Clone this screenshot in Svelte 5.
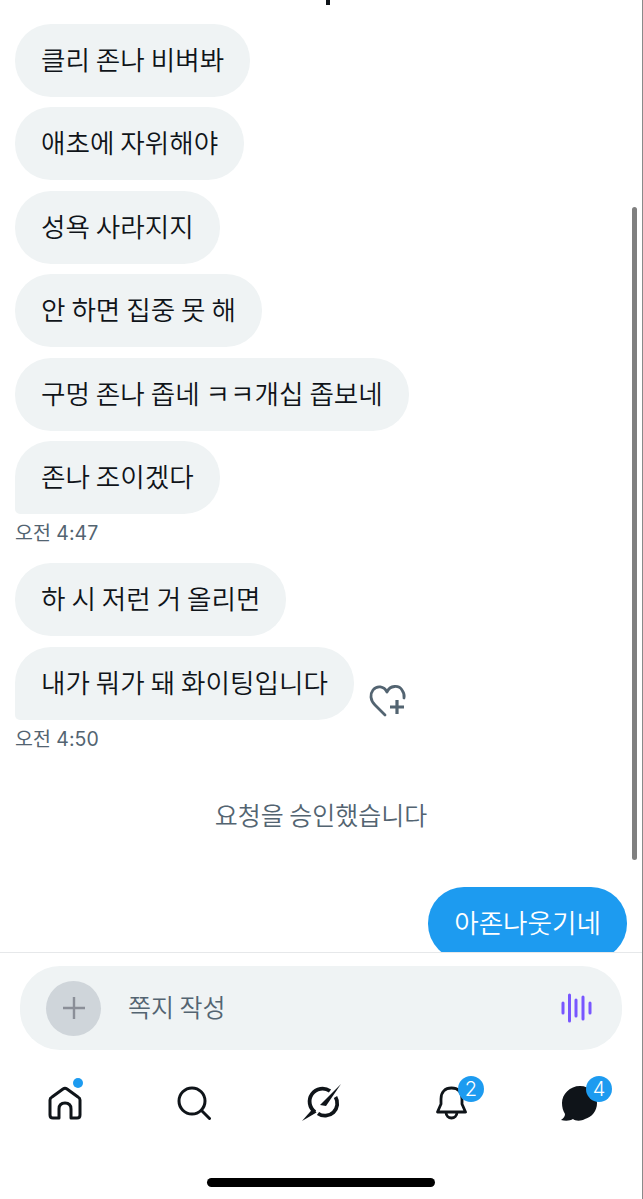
<script>
  const groups = [
    {
      msgs: ["클리 존나 비벼봐", "애초에 자위해야", "성욕 사라지지", "안 하면 집중 못 해", "구멍 존나 좁네 ㅋㅋ개십 좁보네", "존나 조이겠다"],
      time: "오전 4:47",
    },
    { msgs: ["하 시 저런 거 올리면", "내가 뭐가 돼 화이팅입니다"], time: "오전 4:50", react: true },
  ];
</script>

<div class="screen">
  <div class="thread">
    <div class="clipped"></div>
    {#each groups as group}
      <div class="group">
        {#each group.msgs as msg, i}
          <div class="row">
            <div class="bubble" class:last={i === group.msgs.length - 1}>{msg}</div>
            {#if group.react && i === group.msgs.length - 1}
              <svg class="react" width="55" height="50" viewBox="0 0 55 50" fill="none" stroke="#536471" stroke-width="2.8" stroke-linecap="round" stroke-linejoin="round">
                <path d="M24 40 L14 30 C9 25 9 19 12 15 C16 10 23 11 26 17 C29 10 38 10 41 15 C43 18 43.5 21 43 23" />
                <path d="M36 25 V39 M29 32 H43" stroke-width="3.2" stroke-linecap="butt" />
              </svg>
            {/if}
          </div>
        {/each}
        <div class="time">{group.time}</div>
      </div>
    {/each}
    <div class="notice">요청을 승인했습니다</div>
    <div class="row mine"><div class="bubble blue">아존나웃기네</div></div>
    <div class="scrollbar"></div>
  </div>

  <div class="composer">
    <div class="input">
      <div class="plus">
        <svg width="24" height="24" viewBox="0 0 24 24" stroke="#8b8f98" stroke-width="2.4"><path d="M12 1 V23 M1 12 H23" /></svg>
      </div>
      <span class="placeholder">쪽지 작성</span>
      <svg class="voice" width="31" height="30" viewBox="0 0 31 30" stroke="#7856ff" stroke-width="3" stroke-linecap="round">
        <path d="M2 10 V20 M8.5 2 V28 M15 7 V23 M22 4 V26 M29 10 V20" />
      </svg>
    </div>
  </div>

  <nav class="tabs">
    <div class="tab">
      <span class="icon">
        <svg width="34" height="34" viewBox="0 0 34 34" fill="none" stroke="#0f1419" stroke-width="3" stroke-linejoin="round">
          <path d="M2 14 Q2 12 4 11 L15 3 Q17 1.5 19 3 L30 11 Q32 12 32 14 V29 Q32 32 29 32 H23 V23 Q23 17 17 17 Q11 17 11 23 V32 H5 Q2 32 2 29 Z" />
        </svg>
        <span class="dot"></span>
      </span>
    </div>
    <div class="tab">
      <span class="icon">
        <svg width="34" height="34" viewBox="0 0 34 34" fill="none" stroke="#0f1419" stroke-width="3" stroke-linecap="round">
          <circle cx="15" cy="15" r="13" />
          <path d="M24.5 24.5 L32.5 32.5" />
        </svg>
      </span>
    </div>
    <div class="tab">
      <span class="icon">
        <svg width="55" height="50" viewBox="0 0 55 50">
          <g fill="none" stroke="#0f1419" stroke-width="3.8">
            <path d="M20 34 A12.3 12.3 0 0 1 35 13" />
            <path d="M40.5 19 A12.3 12.3 0 0 1 23 35.5" />
          </g>
          <path d="M46 6 L25 27 L31 28 Z" fill="#0f1419" />
          <path d="M7 43 L18 30.5 L21.5 34.5 Z" fill="#0f1419" />
        </svg>
      </span>
    </div>
    <div class="tab">
      <span class="icon">
        <svg width="31" height="34" viewBox="0 0 31 34" fill="none" stroke="#0f1419" stroke-width="2.8" stroke-linejoin="round">
          <path d="M1.5 26 L5 18 V13 C5 6 9 2 15.5 2 C22 2 26 6 26 13 V18 L29.5 26 Z" />
          <path d="M10 26 C10 34 21 34 21 26" />
        </svg>
        <span class="badge bell">2</span>
      </span>
    </div>
    <div class="tab">
      <span class="icon chat-icon">
        <svg width="36" height="35" viewBox="0 0 36 35">
          <path d="M19 0 C29 0 36 8 36 17 C36 25 31 31 24 33 C20 35.5 14 35 12 33 C9 35 4 35 0 34 C3 32 4 30 4 28 C2 25 1 21 1 17 C1 8 9 0 19 0 Z" fill="#0f1419" />
        </svg>
        <span class="badge chat">4</span>
      </span>
    </div>
  </nav>

  <div class="home-bar"><span></span></div>
</div>

<style>
  :global(body) {
    background: #fff;
  }

  .screen {
    position: relative;
    width: 643px;
    height: 1199px;
    display: flex;
    flex-direction: column;
    box-sizing: border-box;
    border-right: 1px solid #8a8a8a;
    overflow: hidden;
    font-family: "Noto Sans CJK KR", "Noto Sans", sans-serif;
    font-weight: 350;
    color: #0f1419;
  }

  .thread {
    position: relative;
    height: 953px;
    flex: none;
    overflow: hidden;
    padding-left: 15px;
    padding-right: 15px;
    box-sizing: border-box;
    border-bottom: 1px solid #e6e8ea;
  }

  .clipped {
    width: 4px;
    height: 5px;
    margin-left: 311px;
    margin-bottom: 19px;
    background: #0f1419;
  }

  .group {
    margin-bottom: 18px;
  }

  .row {
    display: flex;
    align-items: flex-end;
    margin-bottom: 10.4px;
  }

  .row.mine {
    justify-content: flex-end;
  }

  .bubble {
    height: 73px;
    line-height: 70px;
    padding: 0 26px;
    font-size: 26.6px;
    background: #eff3f4;
    border-radius: 36px;
    white-space: nowrap;
  }

  .bubble.last {
    border-bottom-left-radius: 5px;
  }

  .bubble.blue {
    background: #1d9bf0;
    color: #fff;
  }

  .react {
    margin-left: 7px;
    margin-bottom: -5px;
  }

  .time {
    margin-top: -3px;
    font-family: "Inter", "Noto Sans CJK KR", sans-serif;
    font-size: 19.5px;
    font-weight: 400;
    line-height: 24px;
    color: #536471;
  }

  .notice {
    margin-top: 44.6px;
    margin-bottom: 55px;
    text-align: center;
    font-size: 25px;
    line-height: 36px;
    color: #536471;
  }

  .scrollbar {
    position: absolute;
    top: 207px;
    right: 5px;
    width: 5px;
    height: 653px;
    border-radius: 3px;
    background: #808080;
  }

  .composer {
    padding: 13px 20px 0;
  }

  .input {
    height: 84px;
    border-radius: 40px;
    background: #eff3f4;
    display: flex;
    align-items: center;
    padding: 0 30px 0 26px;
  }

  .plus {
    width: 55px;
    height: 55px;
    border-radius: 50%;
    background: #cfd5da;
    display: flex;
    align-items: center;
    justify-content: center;
  }

  .placeholder {
    flex: 1;
    margin-left: 27px;
    margin-bottom: 4px;
    font-size: 25px;
    color: #536471;
  }

  .tabs {
    display: grid;
    grid-template-columns: repeat(5, 129px);
    margin-top: 28px;
  }

  .tab {
    height: 50px;
    display: flex;
    align-items: center;
    justify-content: center;
  }

  .icon {
    position: relative;
    display: flex;
  }

  .chat-icon {
    margin-left: -3px;
  }

  .dot {
    position: absolute;
    top: -8px;
    left: 25px;
    width: 10px;
    height: 10px;
    border-radius: 50%;
    background: #1d9bf0;
  }

  .badge {
    position: absolute;
    top: -10px;
    width: 26px;
    height: 26px;
    border-radius: 50%;
    background: #1d9bf0;
    color: #fff;
    font-size: 20px;
    line-height: 26px;
    text-align: center;
    font-family: "Inter", sans-serif;
    font-weight: 300;
  }

  .badge.bell {
    left: 22px;
  }

  .badge.chat {
    left: 25px;
  }

  .home-bar {
    margin-top: auto;
    padding-bottom: 12px;
    display: flex;
    justify-content: center;
  }

  .home-bar span {
    width: 228px;
    height: 9px;
    border-radius: 5px;
    background: #000;
  }
</style>
